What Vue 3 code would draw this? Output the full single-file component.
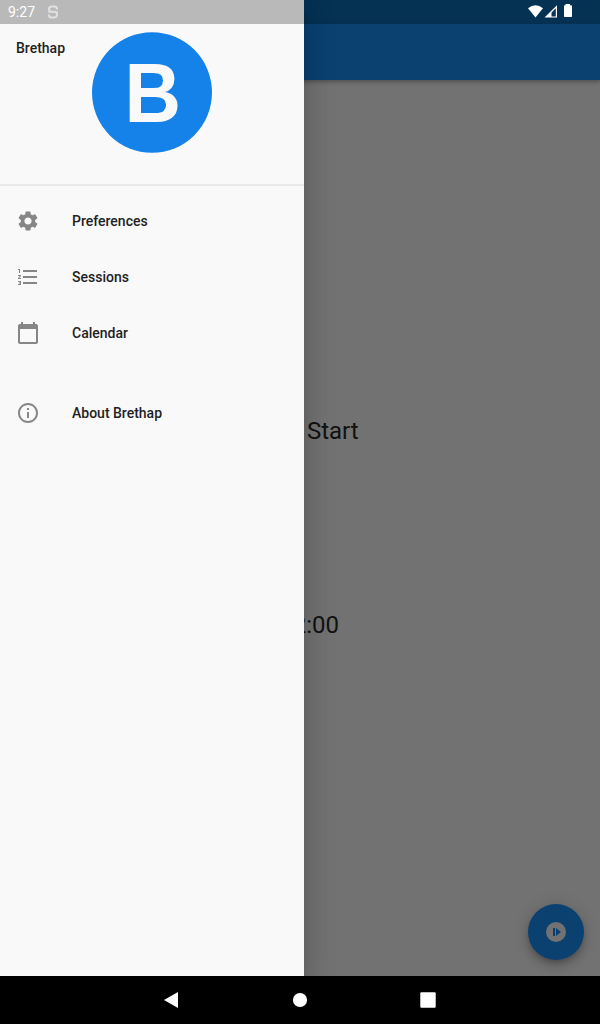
<script setup>
const items = [
  { label: 'Preferences', icon: 'settings' },
  { label: 'Sessions', icon: 'list' },
  { label: 'Calendar', icon: 'calendar' },
  { label: 'About Brethap', icon: 'info', gap: true },
]
const paths = {
  settings:
    'M19.14 12.94c.04-.3.06-.61.06-.94 0-.32-.02-.64-.07-.94l2.03-1.58c.18-.14.23-.41.12-.61l-1.92-3.32c-.12-.22-.37-.29-.59-.22l-2.39.96c-.5-.38-1.03-.7-1.62-.94l-.36-2.54c-.04-.24-.24-.41-.48-.41h-3.84c-.24 0-.43.17-.47.41l-.36 2.54c-.59.24-1.13.57-1.62.94l-2.39-.96c-.22-.08-.47 0-.59.22L2.74 8.87c-.12.21-.08.47.12.61l2.03 1.58c-.05.3-.09.63-.09.94s.02.64.07.94l-2.03 1.58c-.18.14-.23.41-.12.61l1.92 3.32c.12.22.37.29.59.22l2.39-.96c.5.38 1.03.7 1.62.94l.36 2.54c.05.24.24.41.48.41h3.84c.24 0 .44-.17.47-.41l.36-2.54c.59-.24 1.13-.56 1.62-.94l2.39.96c.22.08.47 0 .59-.22l1.92-3.32c.12-.22.07-.47-.12-.61l-2.01-1.58zM12 15.6c-1.98 0-3.6-1.62-3.6-3.6s1.62-3.6 3.6-3.6 3.6 1.62 3.6 3.6-1.62 3.6-3.6 3.6z',
  list:
    'M2 17h2v.5H3v1h1v.5H2v1h3v-4H2v1zm1-9h1V4H2v1h1v3zm-1 3h1.8L2 13.1v.9h3v-1H3.2L5 10.9V10H2v1zm5-6v2h14V5H7zm0 14h14v-2H7v2zm0-6h14v-2H7v2z',
  calendar:
    'M20 3h-1V1h-2v2H7V1H5v2H4c-1.1 0-2 .9-2 2v16c0 1.100.9 2 2 2h16c1.100 0 2-.9 2-2V5c0-1.100-.9-2-2-2zm0 18H4V8h16v13z',
  info:
    'M11 7h2v2h-2zm0 4h2v6h-2zm1-9C6.480 2 2 6.480 2 12s4.480 10 10 10 10-4.480 10-10S17.520 2 12 2zm0 18c-4.410 0-8-3.590-8-8s3.590-8 8-8 8 3.590 8 8-3.590 8-8 8z',
}
</script>

<template>
  <div class="screen">
    <div class="status-bg"></div>
    <header class="appbar"></header>
    <main class="content">
      <p class="line start">Press Start</p>
      <p class="line timer">0:02:00</p>
    </main>
    <button class="fab" aria-label="Start">
      <svg width="24" height="24" viewBox="0 0 24 24">
        <circle cx="12" cy="12" r="10" fill="#727272" />
        <path d="M9 8h2v8H9zM12 8v8l5-4z" fill="#093f6f" />
      </svg>
    </button>

    <aside class="drawer">
      <div class="head">
        <span class="name">Brethap</span>
        <svg class="logo" width="120" height="121" viewBox="0 0 120 121">
          <ellipse cx="60" cy="60.500" rx="60" ry="60.300" fill="#1482e8" />
          <text x="32.500" y="89.500" textLength="56.500" lengthAdjust="spacingAndGlyphs">B</text>
        </svg>
      </div>
      <nav>
        <div v-for="i in items" :key="i.label" class="item" :class="{ gap: i.gap }">
          <svg width="24" height="24" viewBox="0 0 24 24"><path :d="paths[i.icon]" fill="#868686" /></svg>
          <span>{{ i.label }}</span>
        </div>
      </nav>
    </aside>

    <div class="status">
      <span class="time">9:27</span>
      <svg class="sys" width="12" height="14" viewBox="0 0 12 14" fill="none">
        <path d="M10 4.500V4Q10 1.500 7.500 1.500H4.500Q2 1.500 2 4T4.500 6.800H7.500Q10 6.800 10 9.500T7.500 12.500H4.500Q2 12.500 2 10V9.500" stroke="#e0e0e0" stroke-width="2" />
        <path d="M1 7h10" stroke="#dcdcdc" stroke-width="1.500" />
      </svg>
      <svg class="signals" width="46" height="16" viewBox="0 0 46 16">
        <path d="M0 4.300Q7.500-1.700 15 4.300L7.500 13.600z" fill="#fff" />
        <path d="M16.500 13.600L29 1.200V13.600z" fill="#fff" />
        <path d="M23.500 8.500L27.800 4.300V12.400H23.500z" fill="#0b3558" />
        <path d="M37.500 0h4.500v1.200h1.200q.8 0 .8.800V12.200q0 .8-.8.800h-6.400q-.8 0-.8-.8V2q0-.8.8-.8h.7z" fill="#fff" />
      </svg>
    </div>

    <footer class="navbar">
      <svg width="16" height="18" viewBox="0 0 16 18"><path d="M0 9L14 1V17z" fill="#fff" /></svg>
      <svg width="16" height="16" viewBox="0 0 16 16"><circle cx="8" cy="8" r="7.100" fill="#fff" /></svg>
      <svg width="16" height="16" viewBox="0 0 16 16"><rect x=".3" y=".3" width="15.400" height="15.400" rx="1" fill="#fff" /></svg>
    </footer>
  </div>
</template>

<style>
body { margin: 0; }
</style>

<style scoped>
.screen {
  position: relative;
  width: 600px;
  height: 1024px;
  overflow: hidden;
  display: flex;
  flex-direction: column;
  background: #727272;
  font-family: Roboto, "Liberation Sans", sans-serif;
}
.status-bg { height: 24px; background: #053153; flex: none; }
.appbar {
  height: 56px;
  flex: none;
  background: #0a4171;
  box-shadow: 0 2px 4px rgba(0, 0, 0, 0.3);
}
.content { flex: 1; text-align: center; color: #111; }
.line { margin: 0 1px 0 0; font-size: 24px; line-height: 28px; }
.start { padding-top: 337px; }
.timer { padding-top: 166px; }
.fab {
  position: absolute;
  left: 528px;
  top: 904px;
  width: 56px;
  height: 56px;
  padding: 0;
  border: 0;
  border-radius: 50%;
  background: #0a4171;
  display: flex;
  align-items: center;
  justify-content: center;
  box-shadow: 0 3px 5px -1px rgba(0, 0, 0, 0.2), 0 6px 10px rgba(0, 0, 0, 0.14), 0 1px 18px rgba(0, 0, 0, 0.12);
}
.drawer {
  position: absolute;
  left: 0;
  top: 0;
  width: 304px;
  height: 976px;
  background: #f9f9f9;
  box-shadow: 0 8px 10px -5px rgba(0, 0, 0, 0.15), 0 16px 24px 2px rgba(0, 0, 0, 0.1), 0 6px 30px 5px rgba(0, 0, 0, 0.09);
}
.head {
  box-sizing: border-box;
  height: 186px;
  padding: 32px 16px 0;
  display: flex;
  border-bottom: 2px solid #e9e9e9;
}
.name {
  width: 76px;
  padding-top: 8px;
  font-size: 14px;
  line-height: 16px;
  font-weight: 500;
  color: #1f1f1f;
}
.logo text {
  font: bold 84px "Liberation Sans", Arial, sans-serif;
  fill: #f9f9f9;
}
nav { padding-top: 7px; }
.item {
  height: 56px;
  display: flex;
  align-items: center;
  gap: 32px;
  padding-left: 16px;
  font-size: 14px;
  font-weight: 500;
  color: #1f1f1f;
}
.gap { margin-top: 24px; }
.status {
  position: absolute;
  left: 0;
  top: 0;
  width: 600px;
  height: 24px;
  display: flex;
  background: linear-gradient(90deg, #b9b9b9 304px, transparent 304px);
}
.time {
  width: 39px;
  padding-left: 8px;
  font-size: 14px;
  line-height: 25px;
  color: #fff;
}
.sys { margin-top: 5px; }
.signals { margin: 4px 26px 0 auto; }
.navbar {
  height: 48px;
  flex: none;
  display: flex;
  align-items: center;
  justify-content: center;
  gap: 112px;
  background: #000;
  z-index: 1;
}
</style>
